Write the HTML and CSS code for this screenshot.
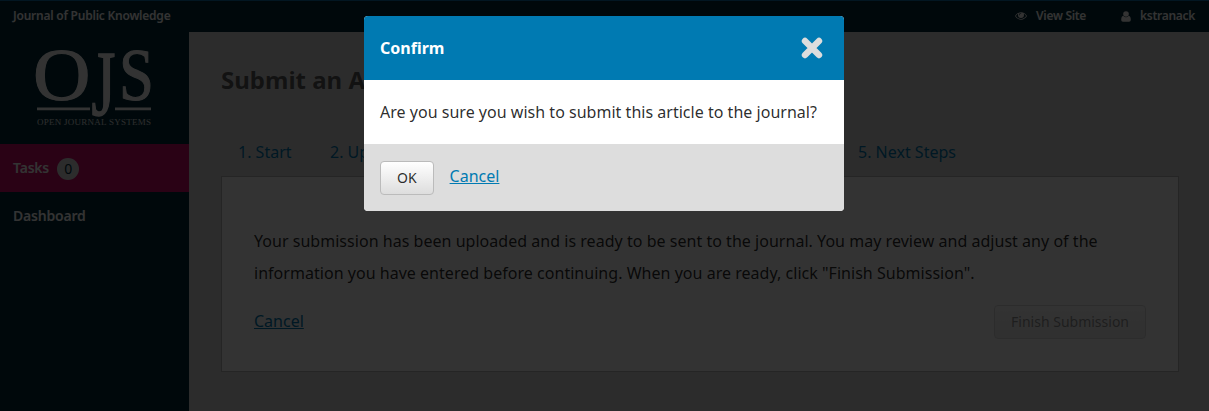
FILE: index.html
```html
<!DOCTYPE html>
<html lang="en">
<head>
<meta charset="utf-8">
<title>Submit an Article</title>
<link rel="stylesheet" href="styles.css">
</head>
<body>
<div class="page">
  <header class="topbar">
    <span class="journal">Journal of Public Knowledge</span>
    <nav class="user-nav">
      <a class="user-link"><svg class="eye" viewBox="0 0 1792 1100" width="12" height="8"><path fill-rule="evenodd" d="M896 0C1290 0 1610 240 1792 550C1610 860 1290 1100 896 1100C502 1100 182 860 0 550C182 240 502 0 896 0ZM500 195Q270 320 135 550C310 810 580 980 896 980C1212 980 1482 810 1657 550Q1522 320 1292 195Q1345 295 1345 410A449 449 0 0 1 447 410Q447 295 500 195ZM896 95Q600 110 580 410Q590 455 628 458Q670 455 676 410Q690 205 896 191Q940 180 944 143Q940 100 896 95Z"/></svg><span class="view">View Site</span></a>
      <a class="user-link user"><svg viewBox="0 0 10 11" width="10" height="11"><circle cx="5" cy="3" r="2.8"/><path d="M2.2 4.8Q5 7.8 7.8 4.8Q9.8 5.3 9.8 9Q9.8 10.8 8 10.8H2Q.2 10.8 .2 9Q.2 5.3 2.2 4.8Z"/></svg><span class="name">kstranack</span></a>
    </nav>
  </header>
  <div class="columns">
    <aside class="sidebar">
      <svg class="logo" width="189" height="112" viewBox="0 32 189 112">
        <g class="logo-letters">
          <text transform="translate(33 99.6) scale(1.09 1)">O</text>
          <text class="logo-j" transform="translate(91.6 114.6) scale(.84 1.28)">J</text>
          <text transform="translate(119 99.6) scale(.86 1)">S</text>
        </g>
        <path d="M37 107.5h53v2.8H37zM115 107.5h36v2.8h-36z"/>
        <text class="logo-sub" x="37" y="125.3" textLength="114" lengthAdjust="spacing">OPEN JOURNAL SYSTEMS</text>
      </svg>
      <a class="nav-item active"><span class="tasks">Tasks</span><span class="badge">0</span></a>
      <a class="nav-item">Dashboard</a>
    </aside>
    <main class="main">
      <h1 class="title">Submit an Article</h1>
      <nav class="tabs"><a class="tab first">1. Start</a><a class="tab second">2. Upload Submission</a><a class="tab last">5. Next Steps</a></nav>
      <section class="panel">
        <p class="message">Your submission has been uploaded and is ready to be sent to the journal. You may review and adjust any of the information you have entered before continuing. When you are ready, click "Finish Submission".</p>
        <div class="panel-actions"><a class="link">Cancel</a><button class="button finish">Finish Submission</button></div>
      </section>
    </main>
  </div>
</div>
<div class="overlay">
  <div class="modal" role="dialog">
    <div class="modal-head"><h2 class="modal-title">Confirm</h2><svg class="close" width="22" height="22" viewBox="0 0 22 22"><path d="M4 4L18 18M18 4L4 18"/></svg></div>
    <p class="modal-body">Are you sure you wish to submit this article to the journal?</p>
    <div class="modal-foot"><button class="button ok">OK</button><a class="link">Cancel</a></div>
  </div>
</div>
</body>
</html>
```
FILE: styles.css
```css
* { box-sizing: border-box; }
body { margin: 0; font: 16px/32px "Noto Sans", sans-serif; color: rgba(0,0,0,.84); overflow: hidden; }
h1, h2, p { margin: 0; }
.page { height: 411px; display: flex; flex-direction: column; background: #ddd; }
.topbar { height: 32px; display: flex; justify-content: space-between; padding: 0 14px 0 13px; background: #002a38; border-top: 1px solid #0a6fa8; color: #fff; font-size: 12px; font-weight: 600; line-height: 30px; letter-spacing: -.23px; }
.user-nav { display: flex; gap: 35px; }
.user-link { display: flex; align-items: center; gap: 9px; height: 30px; }
.view, .name { letter-spacing: -.3px; }
.user-link svg { fill: #fff; }
.columns { flex: 1; display: flex; min-height: 0; }
.sidebar { width: 189px; flex: none; background: #002a38; color: #fff; font-size: 14px; font-weight: 600; letter-spacing: -.2px; }
.logo { display: block; fill: #fff; overflow: visible; letter-spacing: 0; }
.logo-letters { font: 73px "Liberation Serif", serif; stroke: #fff; stroke-width: 1; }
.logo-j { stroke-width: 1.2; }
.logo-sub { font: 9px "Liberation Serif", serif; opacity: .85; }
.nav-item { height: 48px; display: flex; align-items: center; gap: 8px; padding-left: 13px; }
.active { background: #d00a6c; }
.badge { width: 22px; height: 22px; margin-top: 2px; border-radius: 50%; background: #ddd; color: #002c40; font-weight: 400; line-height: 22px; text-align: center; }
.main { flex: 1; padding: 32px 30px 0 32px; }
.title { font-size: 24px; line-height: 32px; color: rgba(0,0,0,.6); font-weight: 700; }
.tabs { display: flex; margin-top: 40px; height: 40px; padding-left: 17px; line-height: 32px; color: #007ab2; }
.first { width: 92px; }
.second { width: 528px; }
.panel { height: 196px; padding: 48px 32px 0; background: #fff; border: 1px solid #bbb; }
.message { width: 860px; letter-spacing: .03px; }
.panel-actions { display: flex; justify-content: space-between; align-items: flex-start; margin-top: 16px; }
.link { color: #007ab2; text-decoration: underline; }
.button { height: 34px; padding: 0 16px; border: 1px solid #bbb; border-radius: 4px; background: linear-gradient(#fff, #ddd); color: rgba(0,0,0,.84); font: 14px/30px "Noto Sans", sans-serif; }
.finish { opacity: .5; }
.overlay { position: absolute; inset: 0; background: rgba(0,0,0,.8); padding-top: 16px; }
.modal { width: 480px; margin: 0 auto 0 364px; border-radius: 4px; overflow: hidden; background: #fff; }
.modal-head { height: 64px; display: flex; align-items: center; justify-content: space-between; padding: 0 21px 0 16px; background: #007ab2; color: #fff; }
.modal-title { font-size: 16px; font-weight: 700; }
.close { stroke: #ddd; stroke-width: 6.4; stroke-linecap: round; fill: none; }
.modal-body { height: 64px; padding: 16px; letter-spacing: .02px; }
.modal-foot { height: 67px; display: flex; align-items: flex-start; gap: 16px; padding: 17px 16px; background: #ddd; }
.modal-foot .link { line-height: 30px; }
```
